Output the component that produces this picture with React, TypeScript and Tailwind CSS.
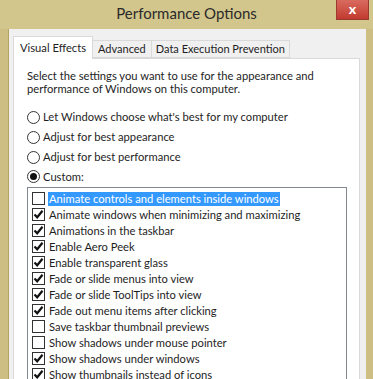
import React from 'react';

const font = { fontFamily: 'Lato, "Liberation Sans", sans-serif' };

const radios = [
  { label: "Let Windows choose what's best for my computer", on: false },
  { label: 'Adjust for best appearance', on: false },
  { label: 'Adjust for best performance', on: false },
  { label: 'Custom:', on: true },
];

const effects = [
  { label: 'Animate controls and elements inside windows', on: false, selected: true },
  { label: 'Animate windows when minimizing and maximizing', on: true },
  { label: 'Animations in the taskbar', on: true },
  { label: 'Enable Aero Peek', on: true },
  { label: 'Enable transparent glass', on: true },
  { label: 'Fade or slide menus into view', on: true },
  { label: 'Fade or slide ToolTips into view', on: true },
  { label: 'Fade out menu items after clicking', on: true },
  { label: 'Save taskbar thumbnail previews', on: false },
  { label: 'Show shadows under mouse pointer', on: false },
  { label: 'Show shadows under windows', on: true },
  { label: 'Show thumbnails instead of icons', on: true },
];

const Radio: React.FC<{ on: boolean }> = ({ on }) => (
  <span className="w-[13px] h-[13px] rounded-full border border-[#333] bg-white flex items-center justify-center shrink-0">
    {on && <span className="w-[7px] h-[7px] rounded-full bg-[#111]" />}
  </span>
);

const Check: React.FC<{ on: boolean }> = ({ on }) => (
  <span className="w-[13px] h-[13px] border border-[#333] bg-white flex items-center justify-center shrink-0">
    {on && (
      <svg width="11" height="11" viewBox="0 0 11 11">
        <path d="M1.5 5.5 L4.2 8.3 L9.5 1.8" fill="none" stroke="#111" strokeWidth="2.2" />
      </svg>
    )}
  </span>
);

export default function App() {
  return (
    <div className="w-[373px] h-[379px] overflow-hidden bg-[#cdbf84] flex flex-col text-[#1e1e1e]" style={font}>
      {/* title bar */}
      <div className="relative h-[29px] shrink-0 bg-[#d3c68c] flex items-center justify-center">
        <span className="text-[15px] text-[#2a2a2a] -mt-[2px]">Performance Options</span>
        <div className="absolute right-[4px] top-0 w-[33px] h-[20px] bg-gradient-to-b from-[#d96a5f] to-[#c2392e] border border-[#9a3a30] border-t-0 flex items-center justify-center">
          <span className="text-white text-[14px] font-black leading-none -mt-[2px]">x</span>
        </div>
      </div>

      {/* client area */}
      <div className="flex-1 ml-[8px] mr-[7px] bg-[#f0f0f0] border-l border-[#b3a35f] pl-[4px] pr-[6px] pt-[6px] flex flex-col">
        <div className="flex items-end h-[23px] text-[11px]">
          <div className="h-[23px] px-[6px] bg-white border border-b-0 border-[#d9d9d9] flex items-start pt-[3px] relative z-10 -mb-px text-[11.2px]">
            Visual Effects
          </div>
          <div className="h-[18px] px-[5px] bg-[#f0f0f0] border border-l-0 border-[#d9d9d9] flex items-center">
            Advanced
          </div>
          <div className="h-[18px] px-[4px] bg-[#f0f0f0] border border-l-0 border-[#d9d9d9] flex items-center">
            Data Execution Prevention
          </div>
        </div>

        <div className="flex-1 bg-white border border-[#d9d9d9] pt-[10px] pl-[13px] text-[11.2px]">
          <p className="leading-[13px]">
            Select the settings you want to use for the appearance and
            <br />
            performance of Windows on this computer.
          </p>

          <div className="mt-[13px] flex flex-col">
            {radios.map(r => (
              <div key={r.label} className="h-[19.7px] flex items-center gap-[3px]">
                <Radio on={r.on} />
                <span>{r.label}</span>
              </div>
            ))}
          </div>

          <div className="w-[320px] border border-[#828790] bg-white pt-[3px] pl-[4px] flex flex-col">
            {effects.map(e => (
              <div key={e.label} className="h-[16px] flex items-center gap-[3px]">
                <Check on={e.on} />
                <span className={e.selected ? 'bg-[#3399ff] text-white px-[1px] leading-[14px]' : 'px-[1px] leading-[14px]'}>
                  {e.label}
                </span>
              </div>
            ))}
          </div>
        </div>
      </div>
    </div>
  );
}
